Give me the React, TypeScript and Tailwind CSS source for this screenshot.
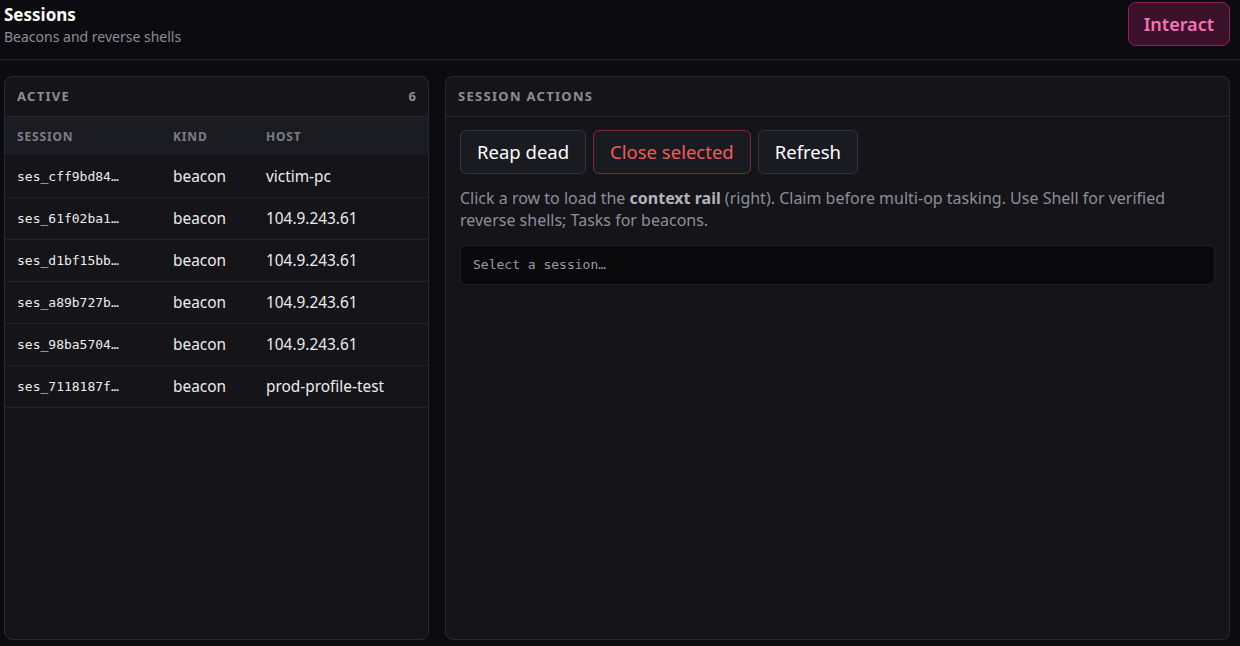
import { useState } from 'react';

type Session = { id: string; kind: string; host: string };

const SESSIONS: Session[] = [
  { id: 'ses_cff9bd84…', kind: 'beacon', host: 'victim-pc' },
  { id: 'ses_61f02ba1…', kind: 'beacon', host: '104.9.243.61' },
  { id: 'ses_d1bf15bb…', kind: 'beacon', host: '104.9.243.61' },
  { id: 'ses_a89b727b…', kind: 'beacon', host: '104.9.243.61' },
  { id: 'ses_98ba5704…', kind: 'beacon', host: '104.9.243.61' },
  { id: 'ses_7118187f…', kind: 'beacon', host: 'prod-profile-test' },
];

const SANS = "font-['Noto_Sans','Open_Sans',sans-serif]";
const MONO = "font-['DejaVu_Sans_Mono','Liberation_Mono',monospace]";

export default function App() {
  const [selected, setSelected] = useState<string | null>(null);

  return (
    <div className={`h-[646px] w-[1240px] overflow-hidden bg-[#0c0c10] text-[#e6e6ea] ${SANS}`}>
      {/* Page header */}
      <header className="flex h-[60px] items-start justify-between border-b border-[#25252b] pl-1 pr-[10px]">
        <div className="pt-[4px]">
          <h1 className="text-[17px] font-bold leading-[22px] text-white">Sessions</h1>
          <p className="mt-[1px] text-[14px] leading-[20px] text-[#8c8c96]">Beacons and reverse shells</p>
        </div>
        <button className="mt-[2px] h-[44px] rounded-lg border border-[#8e2160] bg-[#3b1129] px-[15px] text-[18px] font-semibold text-[#f472b6]">
          Interact
        </button>
      </header>

      <div className="flex gap-4 pl-1 pr-[10px] pt-4">
        {/* Active sessions list */}
        <section className="flex h-[564px] w-[425px] flex-col overflow-hidden rounded-lg border border-[#2a2a31] bg-[#141419]">
          <div className="flex h-[40px] items-center justify-between border-b border-[#26262c] px-3 pt-px">
            <span className="text-[13px] font-bold tracking-[0.1em] text-[#8d8d97]">ACTIVE</span>
            <span className="text-[13px] font-bold text-[#8d8d97]">6</span>
          </div>
          <table className="w-full table-fixed border-collapse">
            <thead>
              <tr className="h-[38px] bg-[#1b1b22] text-left text-[12px] tracking-[0.07em] text-[#7d7d88]">
                <th className="w-[168px] pl-3 pt-px font-bold">SESSION</th>
                <th className="w-[93px] pt-px font-bold">KIND</th>
                <th className="pt-px font-bold">HOST</th>
              </tr>
            </thead>
            <tbody>
              {SESSIONS.map((s) => (
                <tr
                  key={s.id}
                  onClick={() => setSelected(s.id)}
                  className={`h-[42px] cursor-pointer border-b border-[#23232a] ${selected === s.id ? 'bg-[#1d1d25]' : ''}`}
                >
                  <td className={`pl-3 pt-px text-[13px] text-[#ececf0] ${MONO}`}>{s.id}</td>
                  <td className="pt-px text-[15.4px] text-[#ececf0]">{s.kind}</td>
                  <td className="pt-px text-[15.4px] text-[#ececf0]">{s.host}</td>
                </tr>
              ))}
            </tbody>
          </table>
        </section>

        {/* Actions */}
        <section className="flex h-[564px] flex-1 flex-col rounded-lg border border-[#2a2a31] bg-[#141419]">
          <div className="flex h-[40px] items-center border-b border-[#26262c] px-3 pt-px">
            <span className="text-[13px] font-bold tracking-[0.1em] text-[#8d8d97]">SESSION ACTIONS</span>
          </div>
          <div className="px-[14px] pt-[13px]">
            <div className="flex gap-[7px]">
              <button className="h-[44px] rounded-md border border-[#34343c] bg-[#1a1a21] px-4 text-[18.5px] text-white">
                Reap dead
              </button>
              <button className="h-[44px] rounded-md border border-[#7a2a32] bg-[#1a1a21] px-4 text-[18.5px] text-[#f15b5b]">
                Close selected
              </button>
              <button className="h-[44px] rounded-md border border-[#34343c] bg-[#1a1a21] px-4 text-[18.5px] text-white">
                Refresh
              </button>
            </div>
            <p className="mt-[13px] max-w-[720px] text-[16px] leading-[22px] text-[#8e8e98]">
              Click a row to load the <b className="font-bold text-[#b4b4bd]">context rail</b> (right). Claim before
              multi-op tasking. Use Shell for verified reverse shells; Tasks for beacons.
            </p>
            <div
              className={`mt-[14px] flex h-[40px] items-center rounded-md border border-[#202026] bg-[#09090c] px-3 text-[13px] text-[#9a9aa3] ${MONO}`}
            >
              {selected ?? 'Select a session…'}
            </div>
          </div>
        </section>
      </div>
    </div>
  );
}
